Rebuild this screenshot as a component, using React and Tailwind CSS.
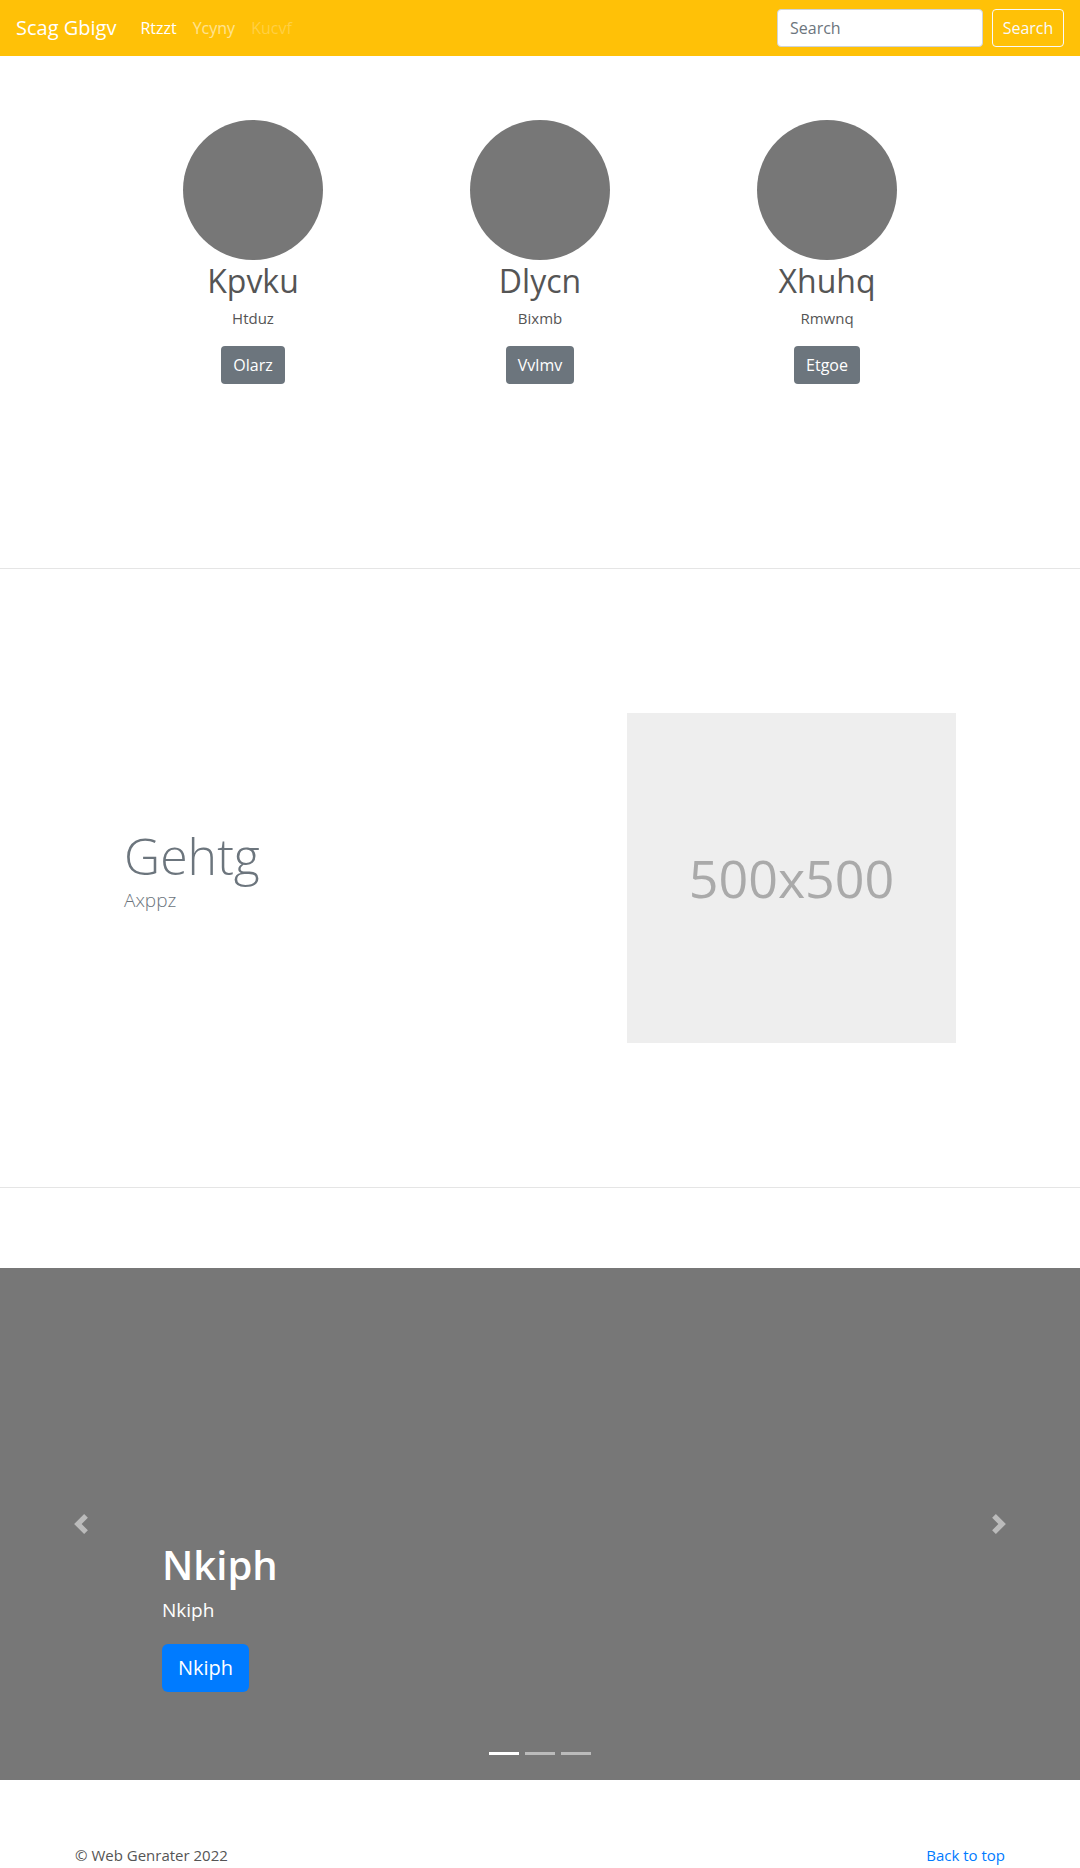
import React from 'react';

const people = [
    { name: 'Kpvku', sub: 'Htduz', btn: 'Olarz' },
    { name: 'Dlycn', sub: 'Bixmb', btn: 'Vvlmv' },
    { name: 'Xhuhq', sub: 'Rmwnq', btn: 'Etgoe' },
];

function Navbar() {
    return (
        <nav className="h-[56px] bg-[#ffc107] flex items-center pl-4 pr-4">
            <span className="text-[20px] text-white mr-4">Scag Gbigv</span>
            <ul className="flex text-[16px]">
                <li className="px-2 text-white">Rtzzt</li>
                <li className="px-2 text-white/55">Ycyny</li>
                <li className="px-2 text-white/25">Kucvf</li>
            </ul>
            <div className="ml-auto flex items-center gap-[9px]">
                <input
                    className="w-[206px] h-[38px] px-3 bg-white border border-[#ced4da] rounded text-[16px] text-[#495057] placeholder:text-[#6c757d] outline-none"
                    placeholder="Search"
                />
                <button className="w-[72px] h-[38px] border border-[#f8f9fa] rounded text-[16px] text-[#f8f9fa]">
                    Search
                </button>
            </div>
        </nav>
    );
}

function Marketing() {
    return (
        <section className="pt-[64px] pb-[184px]">
            <div className="w-[861px] mx-auto grid grid-cols-3">
                {people.map((p) => (
                    <div key={p.name} className="flex flex-col items-center">
                        <div className="w-[140px] h-[140px] rounded-full bg-[#777]"></div>
                        <h2 className="text-[32px] leading-[1.2] text-[#555] mt-[2px]">{p.name}</h2>
                        <p className="text-[15px] leading-[1.5] text-[#555] mt-[7px]">{p.sub}</p>
                        <button className="mt-[16px] h-[38px] px-3 rounded bg-[#6c757d] text-white text-[16px]">
                            {p.btn}
                        </button>
                    </div>
                ))}
            </div>
        </section>
    );
}

function Featurette() {
    return (
        <section className="border-t border-b border-[#e5e5e5] py-[144px]">
            <div className="w-[960px] mx-auto flex items-center px-[64px]">
                <div className="flex-1">
                    <h2 className="text-[50px] font-light leading-[1.2] text-[#6c757d]">Gehtg</h2>
                    <p className="text-[19px] font-light leading-[1.5] text-[#6c757d] mb-4">Axppz</p>
                </div>
                <div className="w-[329px] h-[330px] bg-[#eee] flex items-center justify-center">
                    <span className="text-[52px] text-[#aaa]">500x500</span>
                </div>
            </div>
        </section>
    );
}

function Chevron({ dir }) {
    return (
        <svg width="20" height="20" viewBox="0 0 8 8" fill="#fff" fillOpacity="0.5">
            {dir === 'left' ? (
                <path d="M5.25 0l-4 4 4 4 1.5-1.5L4.25 4l2.5-2.5L5.25 0z" />
            ) : (
                <path d="M2.75 0l-1.5 1.5L3.75 4l-2.5 2.5L2.75 8l4-4-4-4z" />
            )}
        </svg>
    );
}

function Carousel() {
    return (
        <section className="mt-[80px] h-[512px] bg-[#777] relative flex">
            <div className="w-[15%] flex items-center justify-center">
                <Chevron dir="left" />
            </div>
            <div className="flex-1 flex flex-col justify-end pb-[88px]">
                <h1 className="text-[40px] font-semibold leading-[1.2] text-white">Nkiph</h1>
                <p className="text-[19px] text-white mt-[7px]">Nkiph</p>
                <button className="mt-[19px] self-start h-[48px] px-4 rounded-md bg-[#007bff] text-white text-[20px]">
                    Nkiph
                </button>
            </div>
            <div className="w-[15%] flex items-center justify-center">
                <Chevron dir="right" />
            </div>
            <div className="absolute bottom-[25px] left-0 right-0 flex justify-center gap-[6px]">
                <span className="w-[30px] h-[3px] bg-white"></span>
                <span className="w-[30px] h-[3px] bg-white/50"></span>
                <span className="w-[30px] h-[3px] bg-white/50"></span>
            </div>
        </section>
    );
}

function Footer() {
    return (
        <footer className="w-[960px] mx-auto px-[15px] pt-[64px] pb-8 flex justify-between text-[15px]">
            <p className="text-[#555]">© Web Genrater 2022</p>
            <a href="#" className="text-[#007bff]">Back to top</a>
        </footer>
    );
}

export default function App() {
    return (
        <div className="bg-white font-['Open_Sans',sans-serif]">
            <Navbar />
            <Marketing />
            <Featurette />
            <Carousel />
            <Footer />
        </div>
    );
}
